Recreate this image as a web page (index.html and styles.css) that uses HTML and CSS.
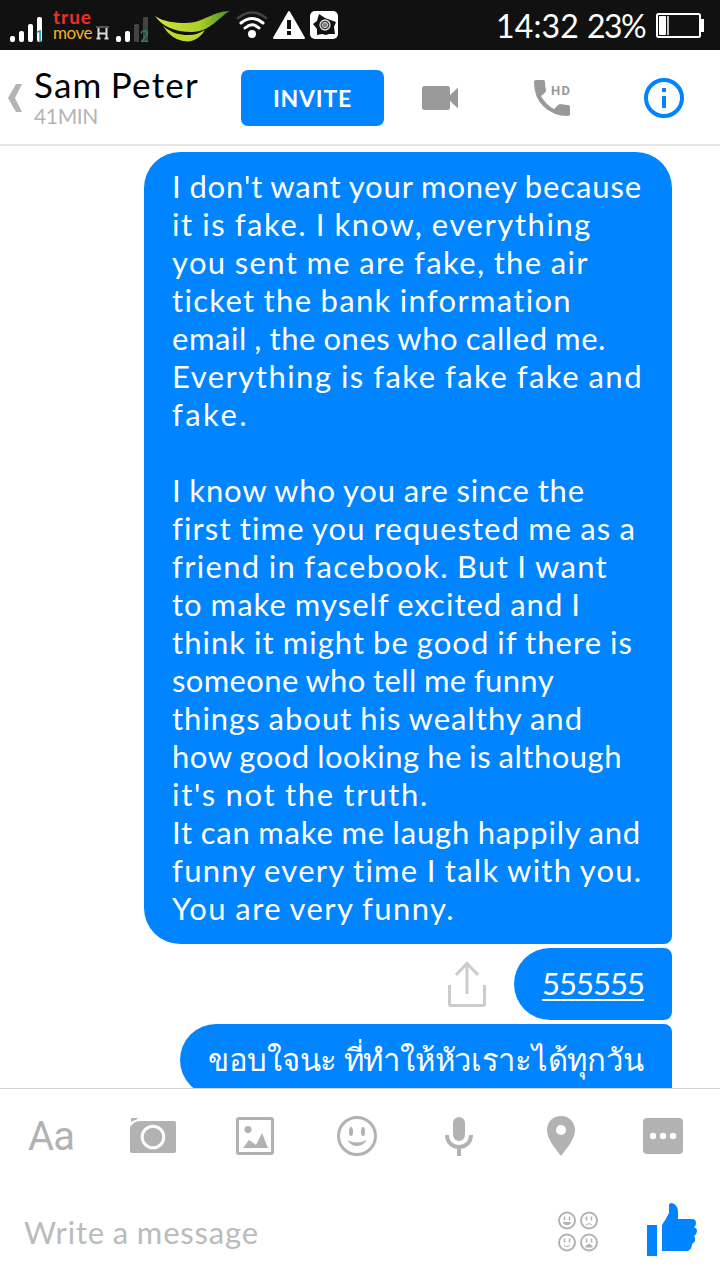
FILE: index.html
```html
<!DOCTYPE html>
<html lang="en">
<head>
    <meta charset="UTF-8">
    <meta name="viewport" content="width=device-width, initial-scale=1.0">
    <title>Sam Peter</title>
    <link rel="stylesheet" href="styles.css">
</head>
<body>
    <div class="status-bar">
        <svg class="signal" width="34" height="34" viewBox="0 0 34 34">
            <g fill="#fff">
                <rect x="0" y="25" width="5" height="6" rx="2"/>
                <rect x="9" y="20" width="5" height="11" rx="2"/>
                <rect x="18" y="13" width="5" height="18" rx="2"/>
                <rect x="27" y="6" width="5" height="25" rx="2"/>
            </g>
            <text class="sim" x="25" y="31">1</text>
        </svg>
        <div class="carrier">
            <span class="true" data-width="39">true</span>
            <span class="move" data-width="39">move</span>
        </div>
        <svg class="net" width="13" height="14" viewBox="0 0 13 14">
            <path d="M0 1h13" stroke="#555" stroke-width="2"/>
            <path d="M2.500 2v11M10.500 2v11M2.500 7.500h8M0.500 12.500h4M8.500 12.500h4" stroke="#ddd" stroke-width="2"/>
        </svg>
        <svg class="signal-two" width="34" height="34" viewBox="0 0 34 34">
            <g fill="#fff">
                <rect x="0" y="25" width="5" height="6" rx="2"/>
                <rect x="9" y="20" width="5" height="11" rx="2"/>
            </g>
            <rect x="18" y="13" width="5" height="18" rx="1" fill="#444"/>
            <rect x="27" y="6" width="5" height="25" rx="1" fill="#444"/>
            <text class="sim" x="24" y="31">2</text>
        </svg>
        <svg class="leaf" width="78" height="36" viewBox="0 0 78 36">
            <defs>
                <linearGradient id="green" x1="0" y1="0" x2="1" y2="0">
                    <stop offset="0" stop-color="#d7e33c"/>
                    <stop offset="0.600" stop-color="#a9cf28"/>
                    <stop offset="1" stop-color="#3f8f28"/>
                </linearGradient>
            </defs>
            <path d="M1 9C10 15 21 16 32 16C49 16 59 4 76 4C66 9 56 25 38 25C20 25 8 19 1 9Z" fill="url(#green)"/>
            <path d="M9 19C18 26 25 28 34 28C41 28 46 26 51 23C46 31 39 36 29 34C20 32 14 27 9 19Z" fill="#bfd62c"/>
        </svg>
        <svg class="wifi" width="32" height="30" viewBox="0 0 32 30" fill="none" stroke-linecap="round">
            <path d="M2 8Q16 -3 30 8" stroke="#444" stroke-width="2.500"/>
            <path d="M5 13Q16 4 27 13M9 18Q16 11.500 23 18" stroke="#fff" stroke-width="3"/>
            <circle cx="16" cy="24" r="4" fill="#fff"/>
        </svg>
        <svg class="warning" width="32" height="30" viewBox="0 0 32 30">
            <path d="M16 2L31 28H1Z" fill="#fff" stroke="#fff" stroke-width="2" stroke-linejoin="round"/>
            <path d="M16 10v9M16 21v4" stroke="#111" stroke-width="4"/>
        </svg>
        <svg class="app" width="28" height="28" viewBox="0 0 28 28">
            <rect width="28" height="28" rx="5" fill="#fff"/>
            <path d="M9 3l6 4 11 4-2 5 1 7-6 0-3 1-4-1-5 1 0-6-4-5 4-3z" fill="#111"/>
            <circle cx="15" cy="14" r="5" fill="#444" stroke="#ddd" stroke-width="1.300"/>
            <circle cx="15" cy="14" r="2.500" fill="#777" stroke="#ddd"/>
        </svg>
        <span class="clock" data-width="83">14:32</span>
        <span class="percent" data-width="58">23%</span>
        <svg class="battery" width="48" height="26" viewBox="0 0 48 26">
            <rect x="1" y="1" width="43" height="23" rx="1.500" fill="none" stroke="#fff" stroke-width="2"/>
            <path d="M45 6h3v13h-3z" fill="#fff"/>
            <rect x="3" y="3" width="7" height="19" rx="1" fill="#fff"/>
            <path d="M12 3v19" stroke="#fff" stroke-width="1.500"/>
        </svg>
    </div>

    <div class="header">
        <svg class="back" width="14" height="28" viewBox="0 0 14 28">
            <path d="M8 0h6L7 14l7 14H8L0 14z" fill="#b4b4b4"/>
        </svg>
        <div class="contact">
            <span class="name" data-width="165">Sam Peter</span>
            <span class="seen" data-width="64">41MIN</span>
        </div>
        <button class="invite"><span data-width="79">INVITE</span></button>
        <svg class="video" width="36" height="24" viewBox="0 0 36 24" fill="#999">
            <rect width="28" height="24" rx="2.500"/>
            <path d="M36 1.500v21L27 14v-4z"/>
        </svg>
        <svg class="call" width="38" height="36" viewBox="0 0 38 36" fill="#999">
            <path d="M2 0H9Q11 0 11 2Q11 7 12 10Q12.500 12 7 16Q12 25 20 29L24 25Q25 24 27 24Q31 25 34 25Q36 25 36 27V34Q36 36 34 36Q19 36 9 26Q0 17 0 2Q0 0 2 0Z"/>
            <text class="hd" x="17" y="15" textLength="19">HD</text>
        </svg>
        <svg class="info" width="40" height="40" viewBox="0 0 40 40">
            <circle cx="20" cy="20" r="18" fill="none" stroke="#0084ff" stroke-width="4"/>
            <path d="M18 10h4v4h-4zM18 18h4v12h-4z" fill="#0084ff"/>
        </svg>
    </div>

    <div class="messages">
        <div class="bubble first">
            <span class="line" data-width="470">I don't want your money because</span>
            <span class="line" data-width="420">it is fake. I know, everything</span>
            <span class="line" data-width="417">you sent me are fake, the air</span>
            <span class="line" data-width="401">ticket the bank information</span>
            <span class="line" data-width="434">email , the ones who called me.</span>
            <span class="line" data-width="471">Everything is fake fake fake and</span>
            <span class="line" data-width="77">fake.</span>
            <span class="line">&nbsp;</span>
            <span class="line" data-width="413">I know who you are since the</span>
            <span class="line" data-width="464">first time you requested me as a</span>
            <span class="line" data-width="436">friend in facebook. But I want</span>
            <span class="line" data-width="409">to make myself excited and I</span>
            <span class="line" data-width="461">think it might be good if there is</span>
            <span class="line" data-width="382">someone who tell me funny</span>
            <span class="line" data-width="411">things about his wealthy and</span>
            <span class="line" data-width="450">how good looking he is although</span>
            <span class="line" data-width="257">it's not the truth.</span>
            <span class="line" data-width="469">It can make me laugh happily and</span>
            <span class="line" data-width="471">funny every time I talk with you.</span>
            <span class="line" data-width="283">You are very funny.</span>
        </div>
        <div class="row">
            <svg class="share" width="38" height="46" viewBox="0 0 38 46" fill="none" stroke="#ccc" stroke-width="3">
                <path d="M1.500 24v19q0 1.500 1.500 1.500h32q1.500 0 1.500-1.500V24M19 33V2M8 14L19 2.500L30 14"/>
            </svg>
            <div class="bubble number"><span class="line" data-width="102">555555</span></div>
        </div>
        <div class="bubble thai"><span class="line" lang="th" data-width="435">ขอบใจนะ ที่ทำให้หัวเราะได้ทุกวัน</span></div>
    </div>

    <div class="composer">
        <div class="tools">
            <span class="aa" data-width="46">Aa</span>
            <svg width="46" height="36" viewBox="0 0 46 36">
                <path d="M0 9Q4 3 10 3H44Q46 3 46 5V33Q46 35 44 35H2Q0 35 0 33ZM1 0H8L6 2Q4 2 1 4Z" fill="#b2b2b2"/>
                <circle cx="23" cy="19" r="10.800" fill="#b2b2b2" stroke="#fff" stroke-width="3"/>
            </svg>
            <svg width="38" height="38" viewBox="0 0 38 38">
                <rect x="1.500" y="1.500" width="35" height="35" rx="1.500" fill="none" stroke="#b2b2b2" stroke-width="3"/>
                <circle cx="12" cy="12.500" r="3.500" fill="#b2b2b2"/>
                <path d="M7 31L13 23L16 25L20 28L26 16L32 31Z" fill="#b2b2b2"/>
            </svg>
            <svg width="40" height="40" viewBox="0 0 40 40" fill="#b2b2b2">
                <circle cx="20" cy="20" r="18.500" fill="none" stroke="#b2b2b2" stroke-width="3"/>
                <ellipse cx="14" cy="15.500" rx="2" ry="4.500"/>
                <ellipse cx="26" cy="15.500" rx="2" ry="4.500"/>
                <path d="M10.500 24Q20 29 29.500 24Q26 30 20 30T10.500 24Z"/>
            </svg>
            <svg width="28" height="40" viewBox="0 0 28 40">
                <rect x="8" y="1" width="12" height="24" rx="6" fill="#b2b2b2"/>
                <path d="M2 19C2 35 26 35 26 19M14 31v9" fill="none" stroke="#b2b2b2" stroke-width="4"/>
            </svg>
            <svg width="28" height="40" viewBox="0 0 28 40">
                <path d="M14 0C6 0 0 6 0 14C0 23 8 32 14 40C20 32 28 23 28 14C28 6 22 0 14 0Z" fill="#b2b2b2"/>
                <circle cx="14" cy="14" r="5" fill="#fff"/>
            </svg>
            <svg width="40" height="36" viewBox="0 0 40 36">
                <rect width="40" height="36" rx="4" fill="#b2b2b2"/>
                <g fill="#fff">
                    <circle cx="10" cy="18" r="3.200"/>
                    <circle cx="20" cy="18" r="3.200"/>
                    <circle cx="30" cy="18" r="3.200"/>
                </g>
            </svg>
        </div>
        <div class="write">
            <span class="placeholder" data-width="235">Write a message</span>
            <svg class="stickers" width="40" height="41" viewBox="0 0 40 41" fill="none" stroke="#b2b2b2">
                <g stroke-width="2">
                    <circle cx="9" cy="9.500" r="8"/>
                    <circle cx="31" cy="9.500" r="8"/>
                    <circle cx="9" cy="31.500" r="8"/>
                    <circle cx="31" cy="31.500" r="8"/>
                </g>
                <path d="M6.500 5.500v4M11.500 5.500v4M28.500 5.500v4M33.500 5.500v4M6.500 27.500v4M11.500 27.500v4M28.500 27.500v4M33.500 27.500v4" stroke-width="1.500"/>
                <path d="M5 11.500h8Q9 16 5 11.500ZM27.500 36Q31 30.500 34.500 36Z" fill="#b2b2b2"/>
                <path d="M28 14Q31 11 34 14M6 34.500Q9 37 12 34.500"/>
            </svg>
            <svg class="like" width="50" height="53" viewBox="0 0 50 53" fill="#0084ff">
                <path d="M0 22h10v31H0z"/>
                <path d="M15 22Q19 16 22 10V2Q22 0 25 0Q31 2 31 9V16H45Q49 16 49 20Q49 23 47 24Q50 25 50 28Q50 31 47 33Q49 35 48 38Q47 40 45 41Q45 46 41 48H15Z"/>
            </svg>
        </div>
    </div>

    <script>
        // Spread the letters so each text fills its measured width
        document.querySelectorAll("[data-width]").forEach(el => {
            const range = document.createRange();
            range.selectNodeContents(el);
            const current = range.getBoundingClientRect().width;
            const letters = el.textContent.replace(/[\u0e31\u0e34-\u0e3a\u0e47-\u0e4e]/g, "").length;
            el.style.letterSpacing = (el.dataset.width - current) / letters + "px";
        });
    </script>
</body>
</html>
```

FILE: styles.css
```css
* {
    box-sizing: border-box;
}

body {
    margin: 0;
    width: 720px;
    height: 1280px;
    overflow: hidden;
    display: flex;
    flex-direction: column;
    background: #fff;
    font-family: Lato, "Noto Sans", sans-serif;
}

svg {
    display: block;
    flex-shrink: 0;
    overflow: visible;
}

span {
    white-space: nowrap;
}

.status-bar {
    height: 50px;
    flex-shrink: 0;
    display: flex;
    align-items: center;
    padding-left: 10px;
    background: #111;
    color: #fff;
}

.signal, .signal-two {
    margin-top: 5px;
}

.sim {
    font: 16px Roboto, sans-serif;
    fill: #1f8a55;
}

.carrier {
    width: 39px;
    margin-left: 9px;
    display: flex;
    flex-direction: column;
}

.true {
    color: #ee3124;
    font-weight: bold;
    font-size: 19px;
    line-height: 16px;
}

.move {
    color: #f5b324;
    font-size: 17px;
    line-height: 16px;
}

.net {
    margin: 16px 0 0 4px;
}

.signal-two {
    margin-left: 7px;
}

.leaf {
    margin: 0 0 0 4px;
}

.wifi {
    margin-left: 4px;
}

.warning {
    margin-left: 5px;
}

.app {
    margin-left: 5px;
}

.clock, .percent {
    font-size: 32px;
}

.clock {
    width: 83px;
    margin-left: 158px;
}

.percent {
    width: 58px;
    margin-left: 8px;
}

.battery {
    margin: 1px 0 0 11px;
}

.header {
    height: 96px;
    flex-shrink: 0;
    display: flex;
    align-items: center;
    padding-left: 8px;
    border-bottom: 2px solid #e6e6e6;
}

.back {
    margin-top: 2px;
}

.contact {
    width: 165px;
    margin-left: 12px;
    display: flex;
    flex-direction: column;
}

.name {
    font-size: 35px;
    line-height: 36px;
    color: #000;
    word-spacing: -2px;
}

.seen {
    font-size: 21px;
    line-height: 27px;
    color: #b4b4b4;
}

.invite {
    width: 143px;
    height: 56px;
    margin: 2px 0 0 42px;
    padding: 0;
    border: none;
    border-radius: 7px;
    background: #0084ff;
    color: #fff;
    font: bold 23px Lato, sans-serif;
}

.video {
    margin: 2px 0 0 38px;
}

.call {
    margin: 2px 0 0 76px;
}

.hd {
    font: bold 13px Roboto, sans-serif;
}

.info {
    margin: 2px 0 0 72px;
}

.messages {
    height: 942px;
    flex-shrink: 0;
    overflow: hidden;
    display: flex;
    flex-direction: column;
    align-items: flex-end;
    gap: 4px;
    padding: 6px 48px 0 0;
}

.bubble {
    flex-shrink: 0;
    padding: 16px 28px 18px;
    border-radius: 36px 8px 8px 36px;
    background: #0084ff;
    color: #fff;
    font-size: 31px;
    word-spacing: -1px;
}

.first {
    width: 528px;
    padding: 15px 28px 17px;
    border-top-right-radius: 36px;
}

.line {
    display: block;
    height: 38px;
    line-height: 38px;
}

.row {
    display: flex;
    align-items: center;
    gap: 28px;
}

.number {
    width: 158px;
}

.number .line {
    text-decoration: underline;
    text-decoration-thickness: 2px;
    text-underline-offset: 4px;
}

.thai {
    width: 492px;
    height: 72px;
}

.composer {
    height: 192px;
    border-top: 1px solid #d2d2d2;
}

.tools {
    height: 94px;
    display: grid;
    grid-template-columns: repeat(7, 102px);
    justify-content: center;
    align-items: center;
    justify-items: center;
    padding-right: 6px;
}

.aa {
    width: 46px;
    font: 40px Roboto, sans-serif;
    color: #b2b2b2;
}

.write {
    height: 96px;
    display: flex;
    align-items: center;
    padding-left: 24px;
}

.placeholder {
    width: 235px;
    margin-top: 2px;
    font-size: 31px;
    color: #bbb;
    word-spacing: -1px;
}

.stickers {
    margin-left: 299px;
}

.like {
    margin: 0 0 3px 49px;
}
```
